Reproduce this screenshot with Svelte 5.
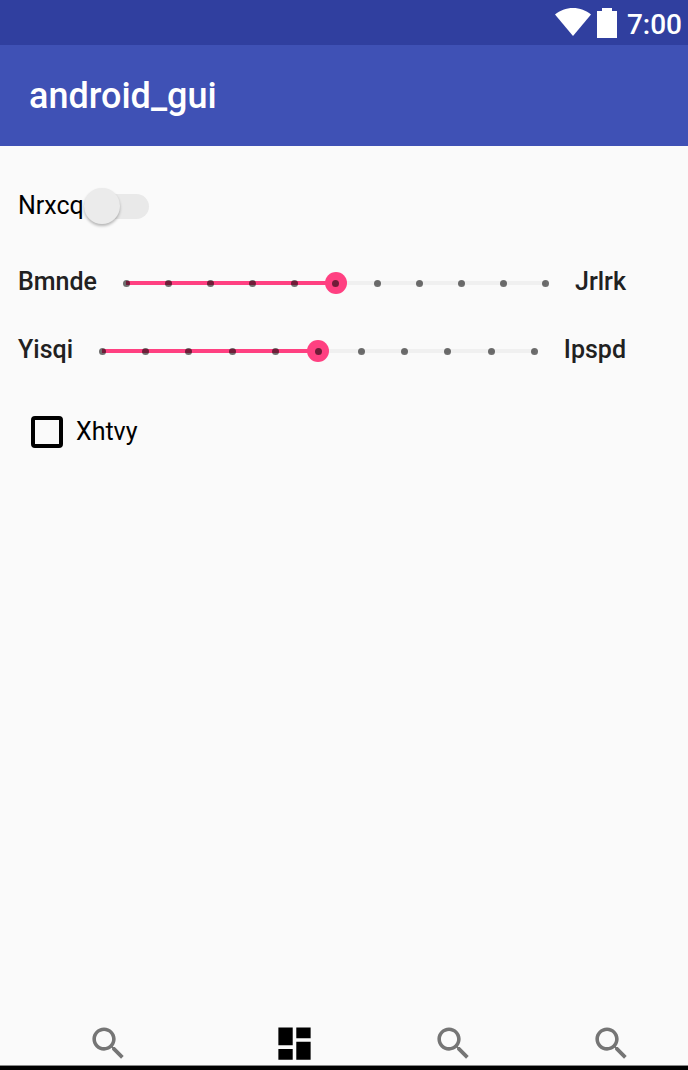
<script>
  let enabled = $state(false);
  let checked = $state(false);
  let active = $state(1);
  let sliders = $state([
    { start: 'Bmnde', end: 'Jrlrk', value: 5 },
    { start: 'Yisqi', end: 'Ipspd', value: 5 }
  ]);
  const ticks = Array.from({ length: 11 }, (_, i) => i);
  const searchPath =
    'M15.5 14h-.79l-.28-.27C15.41 12.59 16 11.11 16 9.5 16 5.91 13.09 3 9.5 3S3 5.91 3 9.5 5.91 16 9.5 16c1.61 0 3.09-.59 4.23-1.57l.27.28v.79l5 4.99L20.49 19l-4.99-5zm-6 0C7.01 14 5 11.99 5 9.5S7.01 5 9.5 5 14 7.01 14 9.5 11.99 14 9.5 14z';
  const dashboardPath = 'M3 13h8V3H3v10zm0 8h8v-6H3v6zm10 0h8V11h-8v10zm0-18v6h8V3h-8z';
  const tabs = [
    { label: 'Search', path: searchPath },
    { label: 'Dashboard', path: dashboardPath },
    { label: 'Search people', path: searchPath },
    { label: 'Search places', path: searchPath }
  ];
</script>

<div class="screen">
  <div class="status">
    <svg class="wifi" viewBox="0 0 36 28" aria-hidden="true">
      <path d="M0 6.5C5 2.4 11 0 18 0s13 2.4 18 6.5L18 28z" />
    </svg>
    <svg class="battery" viewBox="0 0 20 30" aria-hidden="true">
      <path d="M5 0h10v3h5v27H0V3h5z" />
    </svg>
    <span class="clock">7:00</span>
  </div>

  <header><h1>android_gui</h1></header>

  <main>
    <label class="switch-row">
      <span>Nrxcq</span>
      <input class="switch" type="checkbox" role="switch" bind:checked={enabled} />
    </label>

    {#each sliders as slider}
      <div class="slider-row">
        <span>{slider.start}</span>
        <div class="slider">
          <div class="track">
            <div class="fill" style:width="{slider.value * 10}%"></div>
          </div>
          <input
            type="range"
            min="0"
            max="10"
            step="1"
            aria-label="{slider.start} to {slider.end}"
            bind:value={slider.value}
          />
          <div class="ticks">
            {#each ticks as tick (tick)}<i></i>{/each}
          </div>
        </div>
        <span>{slider.end}</span>
      </div>
    {/each}

    <label class="check-row">
      <input class="check" type="checkbox" bind:checked />
      <span>Xhtvy</span>
    </label>
  </main>

  <nav>
    {#each tabs as tab, i}
      <button
        class:active={active === i}
        aria-label={tab.label}
        aria-current={active === i ? 'page' : undefined}
        onclick={() => (active = i)}
      >
        <svg viewBox="0 0 24 24" aria-hidden="true"><path d={tab.path} /></svg>
      </button>
    {/each}
  </nav>
</div>

<style>
  :global(body) {
    margin: 0;
    background: #fafafa;
  }

  .screen {
    box-sizing: border-box;
    display: flex;
    flex-direction: column;
    min-height: 100vh;
    border-bottom: 4px solid #000;
    background: #fafafa;
    color: #000;
    font-family: Roboto, sans-serif;
    font-size: 25px;
    line-height: 30px;
  }

  .status {
    box-sizing: border-box;
    display: flex;
    justify-content: flex-end;
    height: 45px;
    padding: 8px 6px 0 0;
    background: #303f9f;
    color: #fff;
  }

  .status svg {
    fill: #fff;
  }

  .wifi {
    width: 36px;
    height: 28px;
    margin-right: 6px;
  }

  .battery {
    width: 20px;
    height: 30px;
    margin-right: 10px;
  }

  .clock {
    font-size: 28px;
    font-weight: 500;
    line-height: 34px;
  }

  header {
    display: flex;
    align-items: center;
    height: 101px;
    padding: 0 29px;
    background: #3f51b5;
    color: #fff;
  }

  h1 {
    margin: 0;
    font-size: 36px;
    font-weight: 500;
    line-height: 42px;
  }

  main {
    flex: 1;
    display: flex;
    flex-direction: column;
    align-items: stretch;
    padding: 40px 62px 0 18px;
  }

  .switch-row,
  .check-row {
    display: flex;
    align-items: center;
    align-self: flex-start;
    height: 40px;
  }

  .switch-row {
    margin-bottom: 36px;
  }

  .switch {
    appearance: none;
    display: flex;
    align-items: center;
    width: 65px;
    height: 25px;
    margin: 0;
    border-radius: 13px;
    background: #e9e9e9;
  }

  .switch::before {
    content: '';
    width: 36px;
    height: 36px;
    flex: none;
    border-radius: 50%;
    background: #ebebeb;
    box-shadow: 0 2px 3px rgba(0, 0, 0, 0.28);
  }

  .switch:checked {
    justify-content: flex-end;
    background: #ffa0c0;
  }

  .switch:checked::before {
    background: #ff4081;
  }

  .slider-row {
    display: flex;
    align-items: center;
    gap: 18px;
    height: 40px;
    margin-bottom: 28px;
    color: #212121;
    font-weight: 500;
  }

  .slider {
    flex: 1;
    display: grid;
    align-items: center;
  }

  .slider > * {
    grid-area: 1 / 1;
  }

  .track {
    height: 4px;
    margin: 2px 11px 0;
    background: #f0f0f0;
  }

  .fill {
    height: 100%;
    background: #ff4081;
  }

  .slider input {
    appearance: none;
    width: 100%;
    height: 22px;
    margin: 2px 0 0;
    background: transparent;
  }

  .slider input::-webkit-slider-thumb {
    appearance: none;
    width: 22px;
    height: 22px;
    border-radius: 50%;
    background: #ff4081;
  }

  .slider input::-moz-range-thumb {
    width: 22px;
    height: 22px;
    border: 0;
    border-radius: 50%;
    background: #ff4081;
  }

  .ticks {
    z-index: 1;
    display: flex;
    justify-content: space-between;
    margin: 2px 8px 0;
    pointer-events: none;
  }

  .ticks i {
    width: 7px;
    height: 7px;
    border-radius: 50%;
    background: rgba(0, 0, 0, 0.56);
  }

  .check-row {
    gap: 13px;
    margin: 14px 0 0 13px;
  }

  .check {
    appearance: none;
    box-sizing: border-box;
    width: 32px;
    height: 32px;
    margin: 0;
    border: 4px solid #000;
    border-radius: 4px;
  }

  .check:checked {
    background: #ff4081;
  }

  nav {
    display: grid;
    grid-template-columns: 216fr 157fr 161fr 154fr;
    border-bottom: 1px solid #888;
  }

  nav button {
    display: flex;
    justify-content: center;
    padding: 0;
    border: 0;
    background: none;
    color: #757575;
  }

  nav button.active {
    color: #000;
  }

  nav svg {
    width: 43px;
    height: 43px;
    fill: currentColor;
  }
</style>
